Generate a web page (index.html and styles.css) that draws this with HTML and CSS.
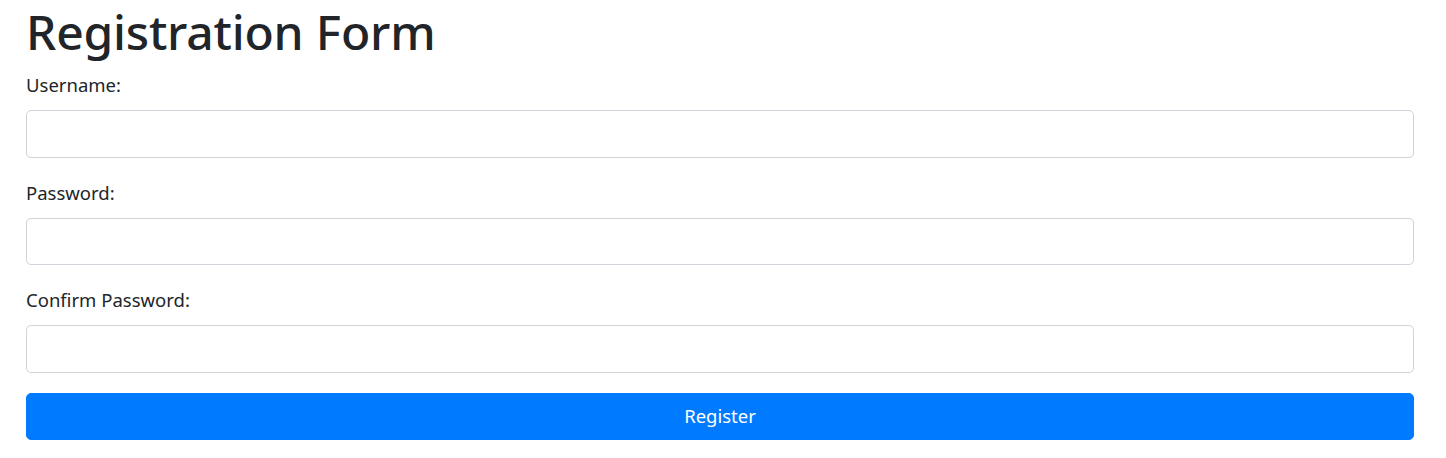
FILE: index.html
```html
<!DOCTYPE html>
<html lang="en">
<head>
<meta charset="utf-8">
<title>Registration Form</title>
<link rel="stylesheet" href="styles.css">
</head>
<body>
<div class="container">
  <h1 class="title">Registration Form</h1>
  <form class="form">
    <div class="form-group">
      <label class="label" for="username">Username:</label>
      <input class="input" type="text" id="username">
    </div>
    <div class="form-group">
      <label class="label" for="password">Password:</label>
      <input class="input" type="password" id="password">
    </div>
    <div class="form-group">
      <label class="label" for="confirm">Confirm Password:</label>
      <input class="input" type="password" id="confirm">
    </div>
    <button class="btn-primary" type="button">Register</button>
  </form>
</div>
</body>
</html>
```

FILE: styles.css
```css
* { box-sizing: border-box; }
html, body { margin: 0; padding: 0; background: #fff; }
body {
  font-family: "Noto Sans", "Open Sans", sans-serif;
  font-size: 18.5px;
  line-height: 1.5;
  color: #212529;
}
.container {
  padding: 0 32px 0 26px;
}
.title {
  margin: 0 0 6px;
  font-size: 48px;
  font-weight: 500;
  line-height: 64px;
  letter-spacing: -0.2px;
}
.form { display: flex; flex-direction: column; }
.form-group {
  display: flex;
  flex-direction: column;
  margin-bottom: 20px;
}
.label {
  display: block;
  margin-bottom: 10px;
  line-height: 30px;
}
.input {
  display: block;
  width: 100%;
  height: 47.5px;
  padding: 7.5px 15px;
  font: inherit;
  color: #495057;
  background: #fff;
  border: 1px solid #ced4da;
  border-radius: 5px;
}
.btn-primary {
  display: block;
  width: 100%;
  height: 47.5px;
  padding: 7.5px 15px;
  font: inherit;
  line-height: 30px;
  color: #fff;
  background: #007bff;
  border: 1px solid #007bff;
  border-radius: 5px;
  text-align: center;
}
```
